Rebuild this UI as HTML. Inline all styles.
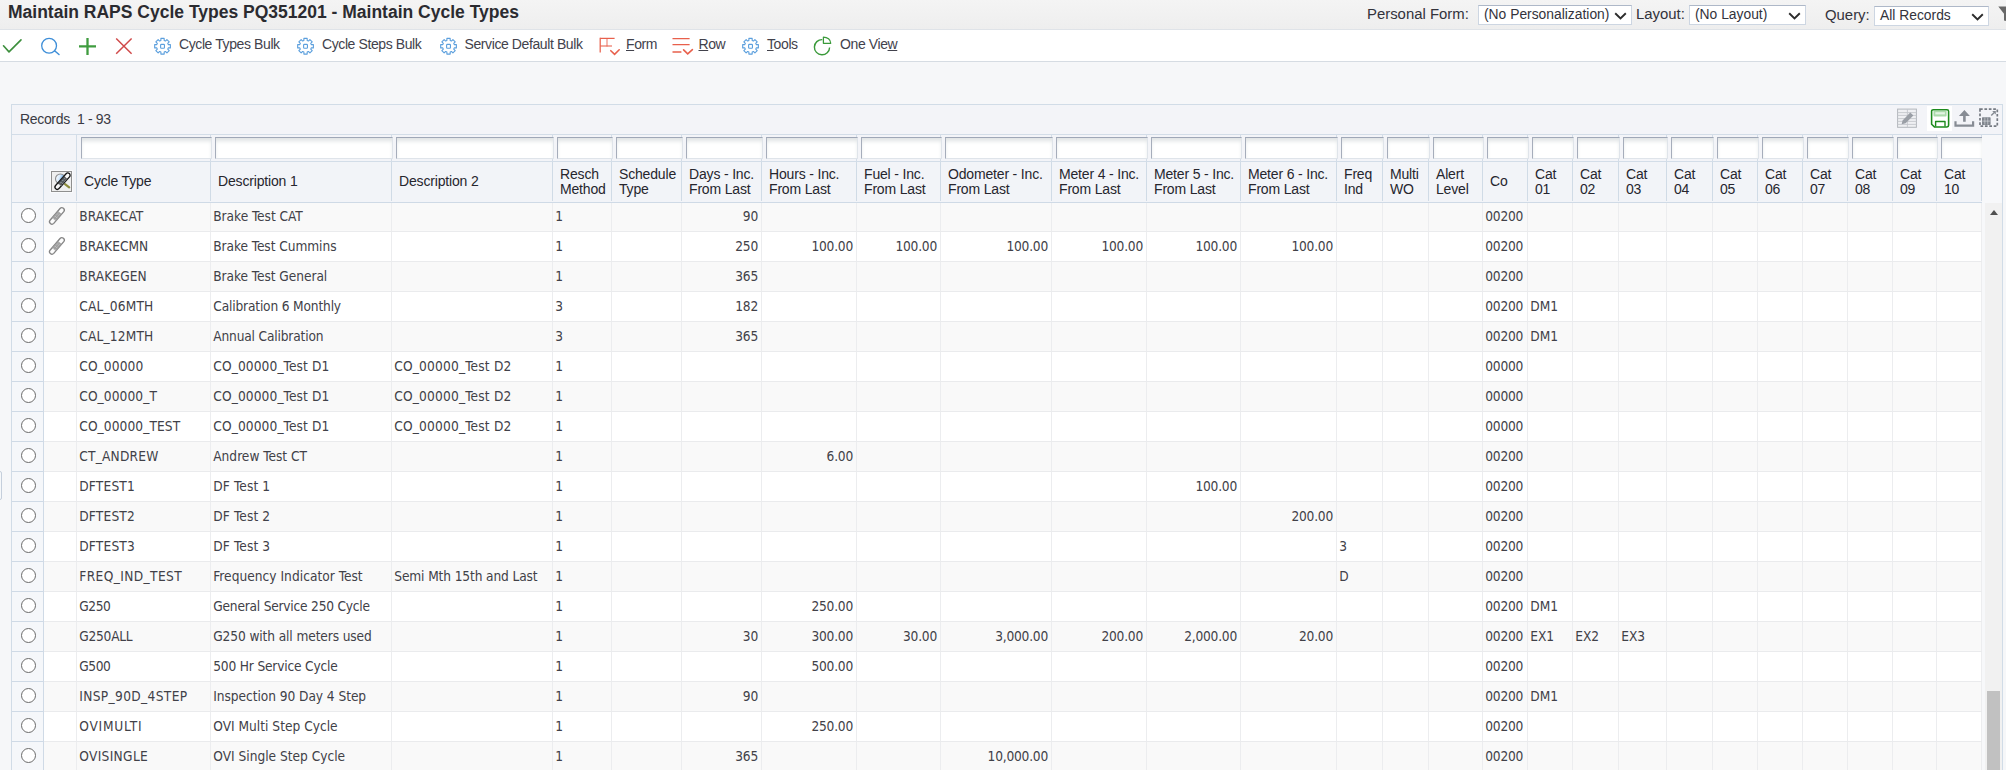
<!DOCTYPE html>
<html><head><meta charset="utf-8"><title>Maintain RAPS Cycle Types</title>
<style>
*{box-sizing:border-box;margin:0;padding:0}
html,body{width:2006px;height:770px;overflow:hidden}
body{background:#f6f7f9;font-family:"Liberation Sans",Arial,sans-serif;color:#2a2a35;position:relative}
#title{position:absolute;left:0;top:0;width:2006px;height:30px;background:linear-gradient(#f4f4f4,#eeeeee);border-bottom:1px solid #dfe3e8}
#title h1{position:absolute;left:8px;top:2px;font-size:17.5px;font-weight:bold;line-height:21px;color:#2b2b30;white-space:nowrap}
.lbl{position:absolute;font-size:14.9px;line-height:18px;color:#33333c;white-space:nowrap}
.sel{position:absolute;height:20px;background:#fff;border:1px solid #cdd6e2;border-top-color:#aeb8c8;font-size:13.85px;line-height:16px;color:#33333c;padding-left:5px;white-space:nowrap}
.sel svg{position:absolute;top:6px}
#tb{position:absolute;left:0;top:30px;width:2006px;height:32px;background:#fff;border-bottom:1px solid #d6dce3}
#tb .t{position:absolute;top:6.4px;font-size:14px;letter-spacing:-0.4px;line-height:16px;color:#42424c;white-space:nowrap}
#tb svg{position:absolute}
#grid{position:absolute;left:11px;top:104px;width:1992px;height:680px;border:1px solid #d1dce7;background:#f7f8fa}
#rec{position:absolute;left:0;top:0;width:1990px;height:30px;border-bottom:1px solid #d3dde8;background:#f3f4f8}
#rec span{position:absolute;left:8px;top:6.4px;font-size:14px;letter-spacing:-0.33px;line-height:16px;color:#3a3a44;white-space:pre}
#filt{position:absolute;left:0;top:30px;width:1970px;height:26px;background:#f3f4f8;overflow:hidden}
#filt i{position:absolute;top:0;height:26px;border-left:1px solid #d3dde8}
#filt b{position:absolute;top:2px;height:22px;background:#fff;border:1px solid #dfe4ea;border-top:1px solid #9fa7b7;border-left:1px solid #a6adbb;box-shadow:inset 0 4px 4px -1px #dfe3e4}
#hdr{position:absolute;left:0;top:56px;width:1970px;height:42px;z-index:3;background:#f2f4f8;border-top:1px solid #d3dde8;border-bottom:1px solid #cfdae6;overflow:hidden}
#hdr .h{position:absolute;top:0;height:39px;padding-top:1px;padding-bottom:0px;border-right:1px solid #d0dbe6;font-size:14px;letter-spacing:-0.17px;line-height:15px;color:#26262e;padding-left:7px;display:flex;flex-direction:column;justify-content:center;white-space:nowrap}
#body{position:absolute;left:0;top:97px;width:1970px;height:600px;overflow:hidden;background:#fff}
.r{position:absolute;left:0;width:1970px;height:30px;border-bottom:1px solid #eaebed;background:#fff}
.r.o{background:#f9f9f9}
.c{position:absolute;top:0;height:29px;border-right:1px solid #ecedef;font-family:"DejaVu Sans Condensed","DejaVu Sans",sans-serif;font-size:13.6px;line-height:29px;color:#414148;white-space:nowrap;padding:0 3px 0 2.25px}
.c.rt{text-align:right}
.c.rad{background:#f5f7fa;border-right:1px solid #cfdae6;height:30px;border-bottom:1px solid #cfdae6}
.c.rad u{position:absolute;left:9px;top:6px;width:15px;height:15px;border:1.3px solid #6b6b6b;border-radius:50%;background:#fff}
.clip{position:absolute;left:0;top:0}
#sb{position:absolute;left:1973px;top:98px;width:17px;height:600px;background:#f1f1f1}
#sb .th{position:absolute;left:2px;top:488px;width:13px;height:120px;background:#c1c1c1}
#sb .up{position:absolute;left:4.5px;top:7px;width:0;height:0;border-left:4px solid transparent;border-right:4px solid transparent;border-bottom:5px solid #505050}
</style></head><body>

<div id="title"><h1>Maintain RAPS Cycle Types PQ351201 - Maintain Cycle Types</h1>
<span class="lbl" style="left:1367px;top:5px">Personal Form:</span>
<div class="sel" style="left:1478px;top:5px;width:154px">(No Personalization)<svg width="13" height="8" viewBox="0 0 13 8" style="left:135px"><path d="M1.2 1.2 L6.5 6.4 L11.8 1.2" fill="none" stroke="#2c2c2c" stroke-width="1.9"/></svg></div>
<span class="lbl" style="left:1636px;top:5px">Layout:</span>
<div class="sel" style="left:1689px;top:5px;width:117px">(No Layout)<svg width="13" height="8" viewBox="0 0 13 8" style="left:98px"><path d="M1.2 1.2 L6.5 6.4 L11.8 1.2" fill="none" stroke="#2c2c2c" stroke-width="1.9"/></svg></div>
<span class="lbl" style="left:1825px;top:6px">Query:</span>
<div class="sel" style="left:1874px;top:6px;width:115px">All Records<svg width="13" height="8" viewBox="0 0 13 8" style="left:96px"><path d="M1.2 1.2 L6.5 6.4 L11.8 1.2" fill="none" stroke="#2c2c2c" stroke-width="1.9"/></svg></div>
<svg style="position:absolute;left:1996px;top:0" width="10" height="30" viewBox="0 0 10 30"><path d="M2.3 6.4 H10 V21 L8 20.6 V13.7 Z" fill="#686868"/></svg>
</div>
<div id="tb">
<svg style="left:0;top:6px" width="26" height="22" viewBox="0 0 26 22"><path d="M3.5 9.8 L9 15.9 L21 3.9" fill="none" stroke="#3d8f3d" stroke-width="1.6" stroke-linecap="round" stroke-linejoin="round"/></svg>
<svg style="left:38px;top:6px" width="24" height="22" viewBox="0 0 24 22"><circle cx="11.1" cy="9.7" r="7.4" fill="none" stroke="#3f8fd8" stroke-width="1.3"/><path d="M16.6 14.8 L21 18.5" stroke="#3f8fd8" stroke-width="1.5" stroke-linecap="round"/></svg>
<svg style="left:77px;top:6px" width="22" height="22" viewBox="0 0 22 22"><path d="M2 10.4 H19 M10.5 1.9 V18.9" stroke="#3f9c3f" stroke-width="2.3" fill="none"/></svg>
<svg style="left:113px;top:6px" width="22" height="22" viewBox="0 0 22 22"><path d="M3.2 2.5 L18.6 17.7 M18.6 2.5 L3.2 17.7" stroke="#d04a4a" stroke-width="1.5" fill="none"/></svg>
<svg style="left:152.7px;top:6.4px" width="20" height="20" viewBox="0 0 20 20"><g fill="none" stroke="#5b9fdd" stroke-width="1.15" stroke-linejoin="round" transform="translate(-0.1 0.85) scale(0.963)"><path d="M8.3 1.6h3.4v2.2l1.3.55 1.55-1.55 2.4 2.4-1.55 1.55.55 1.3h2.2v3.4h-2.2l-.55 1.3 1.55 1.55-2.4 2.4-1.55-1.55-1.3.55v2.2H8.3v-2.2l-1.3-.55-1.55 1.55-2.4-2.4 1.55-1.55-.55-1.3H1.85V8.05h2.2l.55-1.3L3.05 5.2l2.4-2.4L7 4.35l1.3-.55z"/><rect x="8" y="7.8" width="4" height="4" rx="0.8"/></g></svg>
<span class="t" style="left:179px">Cycle Types Bulk</span>
<svg style="left:296px;top:6.4px" width="20" height="20" viewBox="0 0 20 20"><g fill="none" stroke="#5b9fdd" stroke-width="1.15" stroke-linejoin="round" transform="translate(-0.1 0.85) scale(0.963)"><path d="M8.3 1.6h3.4v2.2l1.3.55 1.55-1.55 2.4 2.4-1.55 1.55.55 1.3h2.2v3.4h-2.2l-.55 1.3 1.55 1.55-2.4 2.4-1.55-1.55-1.3.55v2.2H8.3v-2.2l-1.3-.55-1.55 1.55-2.4-2.4 1.55-1.55-.55-1.3H1.85V8.05h2.2l.55-1.3L3.05 5.2l2.4-2.4L7 4.35l1.3-.55z"/><rect x="8" y="7.8" width="4" height="4" rx="0.8"/></g></svg>
<span class="t" style="left:322px">Cycle Steps Bulk</span>
<svg style="left:438.5px;top:6.4px" width="20" height="20" viewBox="0 0 20 20"><g fill="none" stroke="#5b9fdd" stroke-width="1.15" stroke-linejoin="round" transform="translate(-0.1 0.85) scale(0.963)"><path d="M8.3 1.6h3.4v2.2l1.3.55 1.55-1.55 2.4 2.4-1.55 1.55.55 1.3h2.2v3.4h-2.2l-.55 1.3 1.55 1.55-2.4 2.4-1.55-1.55-1.3.55v2.2H8.3v-2.2l-1.3-.55-1.55 1.55-2.4-2.4 1.55-1.55-.55-1.3H1.85V8.05h2.2l.55-1.3L3.05 5.2l2.4-2.4L7 4.35l1.3-.55z"/><rect x="8" y="7.8" width="4" height="4" rx="0.8"/></g></svg>
<span class="t" style="left:464.5px">Service Default Bulk</span>
<svg style="left:597px;top:6px" width="26" height="22" viewBox="0 0 26 22"><g fill="none" stroke="#e8604c" stroke-width="1.25"><path d="M3.2 1.8 V16.4" /><path d="M3.2 2.4 H17.6"/><path d="M3.2 10 H15" stroke-opacity=".85"/><path d="M10 2.4 V10.6" stroke-opacity=".7"/><path d="M13.8 14.7 L17.6 18.4 L22.2 13.8" stroke-width="1.6" stroke-linecap="round"/></g></svg>
<span class="t" style="left:626px"><u>F</u>orm</span>
<svg style="left:670px;top:6px" width="26" height="22" viewBox="0 0 26 22"><g fill="none" stroke="#e8604c" stroke-width="1.3"><path d="M2.5 2.7 H19.6 M2.5 8.7 H19.6 M2.5 16 H11.4"/><path d="M13.6 13.9 L17.7 17.9 L22.4 13.6" stroke-width="1.6" stroke-linecap="round"/></g></svg>
<span class="t" style="left:698.5px"><u>R</u>ow</span>
<svg style="left:740.5px;top:6.4px" width="20" height="20" viewBox="0 0 20 20"><g fill="none" stroke="#5b9fdd" stroke-width="1.15" stroke-linejoin="round" transform="translate(-0.1 0.85) scale(0.963)"><path d="M8.3 1.6h3.4v2.2l1.3.55 1.55-1.55 2.4 2.4-1.55 1.55.55 1.3h2.2v3.4h-2.2l-.55 1.3 1.55 1.55-2.4 2.4-1.55-1.55-1.3.55v2.2H8.3v-2.2l-1.3-.55-1.55 1.55-2.4-2.4 1.55-1.55-.55-1.3H1.85V8.05h2.2l.55-1.3L3.05 5.2l2.4-2.4L7 4.35l1.3-.55z"/><rect x="8" y="7.8" width="4" height="4" rx="0.8"/></g></svg>
<span class="t" style="left:767px"><u>T</u>ools</span>
<svg style="left:811px;top:5px" width="24" height="24" viewBox="0 0 24 24"><g fill="none" stroke="#3a9a3a" stroke-width="1.4"><path d="M11.3 4.6 A7.6 7.6 0 1 0 18.6 12.4"/><path d="M12.4 2 V8.3 H19.7 A7.3 6.3 0 0 0 12.4 2 Z" stroke-linejoin="round" stroke-width="1.25"/></g></svg>
<span class="t" style="left:840px">One Vie<u>w</u></span>
</div>
<div style="position:absolute;left:-2px;top:471px;width:4px;height:29px;border:1px solid #c5cfdc;border-radius:3px;background:#f6f8fa"></div>
<div id="grid">
<div id="rec"><span>Records  1 - 93</span></div>
<svg style="position:absolute;left:1885px;top:3px" width="21" height="21" viewBox="0 0 21 21"><g opacity=".8"><rect x=".6" y="1.1" width="18.8" height="18.2" fill="#eff0f3" stroke="#a4a8ae" stroke-width="1"/><path d="M.6 4.6 H19.4 M.6 7.4 H19.4 M.6 10.6 H19.4 M.6 13.4 H19.4 M.6 16.4 H19.4 M10.4 1.1 V19.3" stroke="#b9bcc2" stroke-width=".9" fill="none"/><path d="M4.6 16.2 L5.6 12.4 L13.2 4.6 L16.4 7.6 L8.6 15.2 Z" fill="#858a92"/></g></svg>
<div style="position:absolute;left:1915px;top:1px;width:25px;height:25px;background:#fff"></div>
<svg style="position:absolute;left:1918px;top:2.5px" width="21" height="21" viewBox="0 0 21 21"><g fill="none" stroke="#1d8a1d" stroke-width="1.55" stroke-linejoin="round"><path d="M3.2 1.7 H17 a1.6 1.6 0 0 1 1.6 1.6 V17.3 a1.6 1.6 0 0 1 -1.6 1.6 H4.4 L1.6 16.2 V3.3 a1.6 1.6 0 0 1 1.6 -1.6 Z"/><path d="M5.6 18.6 V13.5 H15 V18.6" stroke-width="1.4"/></g><rect x="3.5" y="2.6" width="13.1" height="5.9" rx="1" fill="#8fce8f" fill-opacity=".75"/><rect x="5.3" y="4.2" width="9.6" height="2.2" fill="#e9f6e9" fill-opacity=".9"/></svg>
<svg style="position:absolute;left:1942px;top:3px" width="22" height="21" viewBox="0 0 22 21"><path d="M1.5 13.2 V17.7 H19.1 V13.2" fill="none" stroke="#878c94" stroke-width="2.2"/><path d="M10.4 2 L15.9 7.9 H11.7 V13.8 H9.1 V7.9 H4.9 Z" fill="#878c94"/></svg>
<svg style="position:absolute;left:1967px;top:3px" width="21" height="21" viewBox="0 0 21 21"><rect x="1" y="1.2" width="17.3" height="17" fill="none" stroke="#757a82" stroke-width="1.7" stroke-dasharray="2.7 1.7"/><rect x="3" y="9.3" width="8.6" height="7.6" rx=".6" fill="#80858d"/><path d="M5.85 9.6 V16.6 M8.75 9.6 V16.6 M3.3 13.1 H11.3" stroke="#eef0f3" stroke-opacity=".7" stroke-width=".7" fill="none"/><path d="M12.2 7.4 L15.6 4.2" fill="none" stroke="#858a92" stroke-width="1.4"/><path d="M13.2 3 H16.8 V6.6 Z" fill="#858a92"/></svg>
<div id="filt">
<i style="left:64px"></i>
<i style="left:198px"></i><b style="left:69px;width:131px"></b>
<i style="left:379px"></i><b style="left:203px;width:178px"></b>
<i style="left:540px"></i><b style="left:384px;width:158px"></b>
<i style="left:599px"></i><b style="left:545px;width:56px"></b>
<i style="left:669px"></i><b style="left:604px;width:67px"></b>
<i style="left:749px"></i><b style="left:674px;width:77px"></b>
<i style="left:844px"></i><b style="left:754px;width:92px"></b>
<i style="left:928px"></i><b style="left:849px;width:81px"></b>
<i style="left:1039px"></i><b style="left:933px;width:108px"></b>
<i style="left:1134px"></i><b style="left:1044px;width:92px"></b>
<i style="left:1228px"></i><b style="left:1139px;width:91px"></b>
<i style="left:1324px"></i><b style="left:1233px;width:93px"></b>
<i style="left:1370px"></i><b style="left:1329px;width:43px"></b>
<i style="left:1416px"></i><b style="left:1375px;width:43px"></b>
<i style="left:1470px"></i><b style="left:1421px;width:51px"></b>
<i style="left:1515px"></i><b style="left:1475px;width:42px"></b>
<i style="left:1560px"></i><b style="left:1520px;width:42px"></b>
<i style="left:1606px"></i><b style="left:1565px;width:43px"></b>
<i style="left:1654px"></i><b style="left:1611px;width:45px"></b>
<i style="left:1700px"></i><b style="left:1659px;width:43px"></b>
<i style="left:1745px"></i><b style="left:1705px;width:42px"></b>
<i style="left:1790px"></i><b style="left:1750px;width:42px"></b>
<i style="left:1835px"></i><b style="left:1795px;width:42px"></b>
<i style="left:1880px"></i><b style="left:1840px;width:42px"></b>
<i style="left:1924px"></i><b style="left:1885px;width:41px"></b>
<i style="left:1969px"></i><b style="left:1929px;width:42px"></b>
</div>
<div id="hdr">
<div class="h" style="left:0;width:32px"></div>
<div class="h" style="left:32px;width:33px;padding:0"><svg style="position:absolute;left:2px;top:4px" width="30" height="30" viewBox="0 0 30 30"><rect x="5.5" y="5.5" width="20" height="20" fill="#efefef" stroke="#8f8f8f"/><rect x="4.5" y="4.5" width="22" height="22" fill="none" stroke="#fafbfc" stroke-opacity=".8"/><defs><linearGradient id="lg" x1="0" y1="0" x2="1" y2="0.3"><stop offset="0" stop-color="#ffffff"/><stop offset=".45" stop-color="#dcecfb"/><stop offset="1" stop-color="#3f93e6"/></linearGradient></defs><circle cx="14.4" cy="12.9" r="4.9" fill="url(#lg)" stroke="#8d8d8d" stroke-width="1.1"/><path d="M19 18.2 L23.2 21.4" stroke="#8c8c3c" stroke-width="2.2" stroke-linecap="round"/><path d="M13.01 22.54 L23.51 10.84 A2.3 2.3 0 0 0 20.09 7.76 L9.59 19.46 A2.3 2.3 0 0 0 13.01 22.54 Z" fill="#ffffff" fill-opacity=".55" stroke="#151515" stroke-width="1.3"/><path d="M15.02 20.30 L21.49 13.08 L18.07 10.01 L11.59 17.23 Z" fill="#3a3a3a" fill-opacity=".8"/><path d="M13.2 18.6 L19.6 11.4 M14.6 19.9 L21 12.7" stroke="#c9d3dd" stroke-width=".8" stroke-dasharray="1.1 1.3" fill="none"/></svg></div>
<div class="h" style="left:65px;width:134px;padding-bottom:2px"><span>Cycle Type</span></div>
<div class="h" style="left:199px;width:181px;padding-bottom:2px"><span>Description 1</span></div>
<div class="h" style="left:380px;width:161px;padding-bottom:2px"><span>Description 2</span></div>
<div class="h" style="left:541px;width:59px"><span>Resch</span><span>Method</span></div>
<div class="h" style="left:600px;width:70px"><span>Schedule</span><span>Type</span></div>
<div class="h" style="left:670px;width:80px"><span>Days - Inc.</span><span>From Last</span></div>
<div class="h" style="left:750px;width:95px"><span>Hours - Inc.</span><span>From Last</span></div>
<div class="h" style="left:845px;width:84px"><span>Fuel - Inc.</span><span>From Last</span></div>
<div class="h" style="left:929px;width:111px"><span>Odometer - Inc.</span><span>From Last</span></div>
<div class="h" style="left:1040px;width:95px"><span>Meter 4 - Inc.</span><span>From Last</span></div>
<div class="h" style="left:1135px;width:94px"><span>Meter 5 - Inc.</span><span>From Last</span></div>
<div class="h" style="left:1229px;width:96px"><span>Meter 6 - Inc.</span><span>From Last</span></div>
<div class="h" style="left:1325px;width:46px"><span>Freq</span><span>Ind</span></div>
<div class="h" style="left:1371px;width:46px"><span>Multi</span><span>WO</span></div>
<div class="h" style="left:1417px;width:54px"><span>Alert</span><span>Level</span></div>
<div class="h" style="left:1471px;width:45px;padding-bottom:2px"><span>Co</span></div>
<div class="h" style="left:1516px;width:45px"><span>Cat</span><span>01</span></div>
<div class="h" style="left:1561px;width:46px"><span>Cat</span><span>02</span></div>
<div class="h" style="left:1607px;width:48px"><span>Cat</span><span>03</span></div>
<div class="h" style="left:1655px;width:46px"><span>Cat</span><span>04</span></div>
<div class="h" style="left:1701px;width:45px"><span>Cat</span><span>05</span></div>
<div class="h" style="left:1746px;width:45px"><span>Cat</span><span>06</span></div>
<div class="h" style="left:1791px;width:45px"><span>Cat</span><span>07</span></div>
<div class="h" style="left:1836px;width:45px"><span>Cat</span><span>08</span></div>
<div class="h" style="left:1881px;width:44px"><span>Cat</span><span>09</span></div>
<div class="h" style="left:1925px;width:45px"><span>Cat</span><span>10</span></div>
</div>
<div id="body">
<div class="r o" style="top:0px">
<div class="c rad" style="left:0;width:32px"><u></u></div>
<div class="c" style="left:32px;width:33px"><svg class="clip" width="33" height="29" viewBox="0 0 33 29"><path d="M9.76 21.39 L19.76 9.69 A2.45 2.45 0 0 0 16.04 6.51 L6.04 18.21 A2.45 2.45 0 0 0 9.76 21.39 Z" fill="#fcfcfc" stroke="#858585" stroke-width="1.35"/><path d="M11.71 19.11 L17.68 12.12 L13.96 8.94 L7.99 15.93 Z" fill="#9e9e9e"/><path d="M10.70 17.85 L16.28 11.32 M9.39 16.73 L14.97 10.20" stroke="#dcdcdc" stroke-width=".8" stroke-dasharray="1.1 1.2" fill="none"/></svg></div>
<div class="c" style="left:65px;width:134px;letter-spacing:0.03px">BRAKECAT</div>
<div class="c" style="left:199px;width:181px;letter-spacing:-0.03px">Brake Test CAT</div>
<div class="c" style="left:380px;width:161px"></div>
<div class="c" style="left:541px;width:59px">1</div>
<div class="c" style="left:600px;width:70px"></div>
<div class="c rt" style="left:670px;width:80px;letter-spacing:-0.2px">90</div>
<div class="c rt" style="left:750px;width:95px"></div>
<div class="c rt" style="left:845px;width:84px"></div>
<div class="c rt" style="left:929px;width:111px"></div>
<div class="c rt" style="left:1040px;width:95px"></div>
<div class="c rt" style="left:1135px;width:94px"></div>
<div class="c rt" style="left:1229px;width:96px"></div>
<div class="c" style="left:1325px;width:46px"></div>
<div class="c" style="left:1371px;width:46px"></div>
<div class="c" style="left:1417px;width:54px"></div>
<div class="c" style="left:1471px;width:45px;letter-spacing:-0.2px">00200</div>
<div class="c" style="left:1516px;width:45px"></div>
<div class="c" style="left:1561px;width:46px"></div>
<div class="c" style="left:1607px;width:48px"></div>
<div class="c" style="left:1655px;width:46px"></div>
<div class="c" style="left:1701px;width:45px"></div>
<div class="c" style="left:1746px;width:45px"></div>
<div class="c" style="left:1791px;width:45px"></div>
<div class="c" style="left:1836px;width:45px"></div>
<div class="c" style="left:1881px;width:44px"></div>
<div class="c" style="left:1925px;width:45px"></div>
</div>
<div class="r" style="top:30px">
<div class="c rad" style="left:0;width:32px"><u></u></div>
<div class="c" style="left:32px;width:33px"><svg class="clip" width="33" height="29" viewBox="0 0 33 29"><path d="M9.76 21.39 L19.76 9.69 A2.45 2.45 0 0 0 16.04 6.51 L6.04 18.21 A2.45 2.45 0 0 0 9.76 21.39 Z" fill="#fcfcfc" stroke="#858585" stroke-width="1.35"/><path d="M11.71 19.11 L17.68 12.12 L13.96 8.94 L7.99 15.93 Z" fill="#9e9e9e"/><path d="M10.70 17.85 L16.28 11.32 M9.39 16.73 L14.97 10.20" stroke="#dcdcdc" stroke-width=".8" stroke-dasharray="1.1 1.2" fill="none"/></svg></div>
<div class="c" style="left:65px;width:134px;letter-spacing:0.04px">BRAKECMN</div>
<div class="c" style="left:199px;width:181px;letter-spacing:-0.06px">Brake Test Cummins</div>
<div class="c" style="left:380px;width:161px"></div>
<div class="c" style="left:541px;width:59px">1</div>
<div class="c" style="left:600px;width:70px"></div>
<div class="c rt" style="left:670px;width:80px;letter-spacing:-0.2px">250</div>
<div class="c rt" style="left:750px;width:95px;letter-spacing:-0.2px">100.00</div>
<div class="c rt" style="left:845px;width:84px;letter-spacing:-0.2px">100.00</div>
<div class="c rt" style="left:929px;width:111px;letter-spacing:-0.2px">100.00</div>
<div class="c rt" style="left:1040px;width:95px;letter-spacing:-0.2px">100.00</div>
<div class="c rt" style="left:1135px;width:94px;letter-spacing:-0.2px">100.00</div>
<div class="c rt" style="left:1229px;width:96px;letter-spacing:-0.2px">100.00</div>
<div class="c" style="left:1325px;width:46px"></div>
<div class="c" style="left:1371px;width:46px"></div>
<div class="c" style="left:1417px;width:54px"></div>
<div class="c" style="left:1471px;width:45px;letter-spacing:-0.2px">00200</div>
<div class="c" style="left:1516px;width:45px"></div>
<div class="c" style="left:1561px;width:46px"></div>
<div class="c" style="left:1607px;width:48px"></div>
<div class="c" style="left:1655px;width:46px"></div>
<div class="c" style="left:1701px;width:45px"></div>
<div class="c" style="left:1746px;width:45px"></div>
<div class="c" style="left:1791px;width:45px"></div>
<div class="c" style="left:1836px;width:45px"></div>
<div class="c" style="left:1881px;width:44px"></div>
<div class="c" style="left:1925px;width:45px"></div>
</div>
<div class="r o" style="top:60px">
<div class="c rad" style="left:0;width:32px"><u></u></div>
<div class="c" style="left:32px;width:33px"></div>
<div class="c" style="left:65px;width:134px;letter-spacing:0.1px">BRAKEGEN</div>
<div class="c" style="left:199px;width:181px;letter-spacing:-0.05px">Brake Test General</div>
<div class="c" style="left:380px;width:161px"></div>
<div class="c" style="left:541px;width:59px">1</div>
<div class="c" style="left:600px;width:70px"></div>
<div class="c rt" style="left:670px;width:80px;letter-spacing:-0.2px">365</div>
<div class="c rt" style="left:750px;width:95px"></div>
<div class="c rt" style="left:845px;width:84px"></div>
<div class="c rt" style="left:929px;width:111px"></div>
<div class="c rt" style="left:1040px;width:95px"></div>
<div class="c rt" style="left:1135px;width:94px"></div>
<div class="c rt" style="left:1229px;width:96px"></div>
<div class="c" style="left:1325px;width:46px"></div>
<div class="c" style="left:1371px;width:46px"></div>
<div class="c" style="left:1417px;width:54px"></div>
<div class="c" style="left:1471px;width:45px;letter-spacing:-0.2px">00200</div>
<div class="c" style="left:1516px;width:45px"></div>
<div class="c" style="left:1561px;width:46px"></div>
<div class="c" style="left:1607px;width:48px"></div>
<div class="c" style="left:1655px;width:46px"></div>
<div class="c" style="left:1701px;width:45px"></div>
<div class="c" style="left:1746px;width:45px"></div>
<div class="c" style="left:1791px;width:45px"></div>
<div class="c" style="left:1836px;width:45px"></div>
<div class="c" style="left:1881px;width:44px"></div>
<div class="c" style="left:1925px;width:45px"></div>
</div>
<div class="r" style="top:90px">
<div class="c rad" style="left:0;width:32px"><u></u></div>
<div class="c" style="left:32px;width:33px"></div>
<div class="c" style="left:65px;width:134px;letter-spacing:0.17px">CAL_06MTH</div>
<div class="c" style="left:199px;width:181px;letter-spacing:-0.16px">Calibration 6 Monthly</div>
<div class="c" style="left:380px;width:161px"></div>
<div class="c" style="left:541px;width:59px">3</div>
<div class="c" style="left:600px;width:70px"></div>
<div class="c rt" style="left:670px;width:80px;letter-spacing:-0.2px">182</div>
<div class="c rt" style="left:750px;width:95px"></div>
<div class="c rt" style="left:845px;width:84px"></div>
<div class="c rt" style="left:929px;width:111px"></div>
<div class="c rt" style="left:1040px;width:95px"></div>
<div class="c rt" style="left:1135px;width:94px"></div>
<div class="c rt" style="left:1229px;width:96px"></div>
<div class="c" style="left:1325px;width:46px"></div>
<div class="c" style="left:1371px;width:46px"></div>
<div class="c" style="left:1417px;width:54px"></div>
<div class="c" style="left:1471px;width:45px;letter-spacing:-0.2px">00200</div>
<div class="c" style="left:1516px;width:45px">DM1</div>
<div class="c" style="left:1561px;width:46px"></div>
<div class="c" style="left:1607px;width:48px"></div>
<div class="c" style="left:1655px;width:46px"></div>
<div class="c" style="left:1701px;width:45px"></div>
<div class="c" style="left:1746px;width:45px"></div>
<div class="c" style="left:1791px;width:45px"></div>
<div class="c" style="left:1836px;width:45px"></div>
<div class="c" style="left:1881px;width:44px"></div>
<div class="c" style="left:1925px;width:45px"></div>
</div>
<div class="r o" style="top:120px">
<div class="c rad" style="left:0;width:32px"><u></u></div>
<div class="c" style="left:32px;width:33px"></div>
<div class="c" style="left:65px;width:134px;letter-spacing:0.17px">CAL_12MTH</div>
<div class="c" style="left:199px;width:181px;letter-spacing:-0.16px">Annual Calibration</div>
<div class="c" style="left:380px;width:161px"></div>
<div class="c" style="left:541px;width:59px">3</div>
<div class="c" style="left:600px;width:70px"></div>
<div class="c rt" style="left:670px;width:80px;letter-spacing:-0.2px">365</div>
<div class="c rt" style="left:750px;width:95px"></div>
<div class="c rt" style="left:845px;width:84px"></div>
<div class="c rt" style="left:929px;width:111px"></div>
<div class="c rt" style="left:1040px;width:95px"></div>
<div class="c rt" style="left:1135px;width:94px"></div>
<div class="c rt" style="left:1229px;width:96px"></div>
<div class="c" style="left:1325px;width:46px"></div>
<div class="c" style="left:1371px;width:46px"></div>
<div class="c" style="left:1417px;width:54px"></div>
<div class="c" style="left:1471px;width:45px;letter-spacing:-0.2px">00200</div>
<div class="c" style="left:1516px;width:45px">DM1</div>
<div class="c" style="left:1561px;width:46px"></div>
<div class="c" style="left:1607px;width:48px"></div>
<div class="c" style="left:1655px;width:46px"></div>
<div class="c" style="left:1701px;width:45px"></div>
<div class="c" style="left:1746px;width:45px"></div>
<div class="c" style="left:1791px;width:45px"></div>
<div class="c" style="left:1836px;width:45px"></div>
<div class="c" style="left:1881px;width:44px"></div>
<div class="c" style="left:1925px;width:45px"></div>
</div>
<div class="r" style="top:150px">
<div class="c rad" style="left:0;width:32px"><u></u></div>
<div class="c" style="left:32px;width:33px"></div>
<div class="c" style="left:65px;width:134px;letter-spacing:0.11px">CO_00000</div>
<div class="c" style="left:199px;width:181px;letter-spacing:0.12px">CO_00000_Test D1</div>
<div class="c" style="left:380px;width:161px;letter-spacing:0.19px">CO_00000_Test D2</div>
<div class="c" style="left:541px;width:59px">1</div>
<div class="c" style="left:600px;width:70px"></div>
<div class="c rt" style="left:670px;width:80px"></div>
<div class="c rt" style="left:750px;width:95px"></div>
<div class="c rt" style="left:845px;width:84px"></div>
<div class="c rt" style="left:929px;width:111px"></div>
<div class="c rt" style="left:1040px;width:95px"></div>
<div class="c rt" style="left:1135px;width:94px"></div>
<div class="c rt" style="left:1229px;width:96px"></div>
<div class="c" style="left:1325px;width:46px"></div>
<div class="c" style="left:1371px;width:46px"></div>
<div class="c" style="left:1417px;width:54px"></div>
<div class="c" style="left:1471px;width:45px;letter-spacing:-0.2px">00000</div>
<div class="c" style="left:1516px;width:45px"></div>
<div class="c" style="left:1561px;width:46px"></div>
<div class="c" style="left:1607px;width:48px"></div>
<div class="c" style="left:1655px;width:46px"></div>
<div class="c" style="left:1701px;width:45px"></div>
<div class="c" style="left:1746px;width:45px"></div>
<div class="c" style="left:1791px;width:45px"></div>
<div class="c" style="left:1836px;width:45px"></div>
<div class="c" style="left:1881px;width:44px"></div>
<div class="c" style="left:1925px;width:45px"></div>
</div>
<div class="r o" style="top:180px">
<div class="c rad" style="left:0;width:32px"><u></u></div>
<div class="c" style="left:32px;width:33px"></div>
<div class="c" style="left:65px;width:134px;letter-spacing:0.1px">CO_00000_T</div>
<div class="c" style="left:199px;width:181px;letter-spacing:0.12px">CO_00000_Test D1</div>
<div class="c" style="left:380px;width:161px;letter-spacing:0.19px">CO_00000_Test D2</div>
<div class="c" style="left:541px;width:59px">1</div>
<div class="c" style="left:600px;width:70px"></div>
<div class="c rt" style="left:670px;width:80px"></div>
<div class="c rt" style="left:750px;width:95px"></div>
<div class="c rt" style="left:845px;width:84px"></div>
<div class="c rt" style="left:929px;width:111px"></div>
<div class="c rt" style="left:1040px;width:95px"></div>
<div class="c rt" style="left:1135px;width:94px"></div>
<div class="c rt" style="left:1229px;width:96px"></div>
<div class="c" style="left:1325px;width:46px"></div>
<div class="c" style="left:1371px;width:46px"></div>
<div class="c" style="left:1417px;width:54px"></div>
<div class="c" style="left:1471px;width:45px;letter-spacing:-0.2px">00000</div>
<div class="c" style="left:1516px;width:45px"></div>
<div class="c" style="left:1561px;width:46px"></div>
<div class="c" style="left:1607px;width:48px"></div>
<div class="c" style="left:1655px;width:46px"></div>
<div class="c" style="left:1701px;width:45px"></div>
<div class="c" style="left:1746px;width:45px"></div>
<div class="c" style="left:1791px;width:45px"></div>
<div class="c" style="left:1836px;width:45px"></div>
<div class="c" style="left:1881px;width:44px"></div>
<div class="c" style="left:1925px;width:45px"></div>
</div>
<div class="r" style="top:210px">
<div class="c rad" style="left:0;width:32px"><u></u></div>
<div class="c" style="left:32px;width:33px"></div>
<div class="c" style="left:65px;width:134px;letter-spacing:0.1px">CO_00000_TEST</div>
<div class="c" style="left:199px;width:181px;letter-spacing:0.12px">CO_00000_Test D1</div>
<div class="c" style="left:380px;width:161px;letter-spacing:0.19px">CO_00000_Test D2</div>
<div class="c" style="left:541px;width:59px">1</div>
<div class="c" style="left:600px;width:70px"></div>
<div class="c rt" style="left:670px;width:80px"></div>
<div class="c rt" style="left:750px;width:95px"></div>
<div class="c rt" style="left:845px;width:84px"></div>
<div class="c rt" style="left:929px;width:111px"></div>
<div class="c rt" style="left:1040px;width:95px"></div>
<div class="c rt" style="left:1135px;width:94px"></div>
<div class="c rt" style="left:1229px;width:96px"></div>
<div class="c" style="left:1325px;width:46px"></div>
<div class="c" style="left:1371px;width:46px"></div>
<div class="c" style="left:1417px;width:54px"></div>
<div class="c" style="left:1471px;width:45px;letter-spacing:-0.2px">00000</div>
<div class="c" style="left:1516px;width:45px"></div>
<div class="c" style="left:1561px;width:46px"></div>
<div class="c" style="left:1607px;width:48px"></div>
<div class="c" style="left:1655px;width:46px"></div>
<div class="c" style="left:1701px;width:45px"></div>
<div class="c" style="left:1746px;width:45px"></div>
<div class="c" style="left:1791px;width:45px"></div>
<div class="c" style="left:1836px;width:45px"></div>
<div class="c" style="left:1881px;width:44px"></div>
<div class="c" style="left:1925px;width:45px"></div>
</div>
<div class="r o" style="top:240px">
<div class="c rad" style="left:0;width:32px"><u></u></div>
<div class="c" style="left:32px;width:33px"></div>
<div class="c" style="left:65px;width:134px;letter-spacing:0.22px">CT_ANDREW</div>
<div class="c" style="left:199px;width:181px">Andrew Test CT</div>
<div class="c" style="left:380px;width:161px"></div>
<div class="c" style="left:541px;width:59px">1</div>
<div class="c" style="left:600px;width:70px"></div>
<div class="c rt" style="left:670px;width:80px"></div>
<div class="c rt" style="left:750px;width:95px;letter-spacing:-0.2px">6.00</div>
<div class="c rt" style="left:845px;width:84px"></div>
<div class="c rt" style="left:929px;width:111px"></div>
<div class="c rt" style="left:1040px;width:95px"></div>
<div class="c rt" style="left:1135px;width:94px"></div>
<div class="c rt" style="left:1229px;width:96px"></div>
<div class="c" style="left:1325px;width:46px"></div>
<div class="c" style="left:1371px;width:46px"></div>
<div class="c" style="left:1417px;width:54px"></div>
<div class="c" style="left:1471px;width:45px;letter-spacing:-0.2px">00200</div>
<div class="c" style="left:1516px;width:45px"></div>
<div class="c" style="left:1561px;width:46px"></div>
<div class="c" style="left:1607px;width:48px"></div>
<div class="c" style="left:1655px;width:46px"></div>
<div class="c" style="left:1701px;width:45px"></div>
<div class="c" style="left:1746px;width:45px"></div>
<div class="c" style="left:1791px;width:45px"></div>
<div class="c" style="left:1836px;width:45px"></div>
<div class="c" style="left:1881px;width:44px"></div>
<div class="c" style="left:1925px;width:45px"></div>
</div>
<div class="r" style="top:270px">
<div class="c rad" style="left:0;width:32px"><u></u></div>
<div class="c" style="left:32px;width:33px"></div>
<div class="c" style="left:65px;width:134px;letter-spacing:0.19px">DFTEST1</div>
<div class="c" style="left:199px;width:181px;letter-spacing:0.13px">DF Test 1</div>
<div class="c" style="left:380px;width:161px"></div>
<div class="c" style="left:541px;width:59px">1</div>
<div class="c" style="left:600px;width:70px"></div>
<div class="c rt" style="left:670px;width:80px"></div>
<div class="c rt" style="left:750px;width:95px"></div>
<div class="c rt" style="left:845px;width:84px"></div>
<div class="c rt" style="left:929px;width:111px"></div>
<div class="c rt" style="left:1040px;width:95px"></div>
<div class="c rt" style="left:1135px;width:94px;letter-spacing:-0.2px">100.00</div>
<div class="c rt" style="left:1229px;width:96px"></div>
<div class="c" style="left:1325px;width:46px"></div>
<div class="c" style="left:1371px;width:46px"></div>
<div class="c" style="left:1417px;width:54px"></div>
<div class="c" style="left:1471px;width:45px;letter-spacing:-0.2px">00200</div>
<div class="c" style="left:1516px;width:45px"></div>
<div class="c" style="left:1561px;width:46px"></div>
<div class="c" style="left:1607px;width:48px"></div>
<div class="c" style="left:1655px;width:46px"></div>
<div class="c" style="left:1701px;width:45px"></div>
<div class="c" style="left:1746px;width:45px"></div>
<div class="c" style="left:1791px;width:45px"></div>
<div class="c" style="left:1836px;width:45px"></div>
<div class="c" style="left:1881px;width:44px"></div>
<div class="c" style="left:1925px;width:45px"></div>
</div>
<div class="r o" style="top:300px">
<div class="c rad" style="left:0;width:32px"><u></u></div>
<div class="c" style="left:32px;width:33px"></div>
<div class="c" style="left:65px;width:134px;letter-spacing:0.19px">DFTEST2</div>
<div class="c" style="left:199px;width:181px;letter-spacing:0.13px">DF Test 2</div>
<div class="c" style="left:380px;width:161px"></div>
<div class="c" style="left:541px;width:59px">1</div>
<div class="c" style="left:600px;width:70px"></div>
<div class="c rt" style="left:670px;width:80px"></div>
<div class="c rt" style="left:750px;width:95px"></div>
<div class="c rt" style="left:845px;width:84px"></div>
<div class="c rt" style="left:929px;width:111px"></div>
<div class="c rt" style="left:1040px;width:95px"></div>
<div class="c rt" style="left:1135px;width:94px"></div>
<div class="c rt" style="left:1229px;width:96px;letter-spacing:-0.2px">200.00</div>
<div class="c" style="left:1325px;width:46px"></div>
<div class="c" style="left:1371px;width:46px"></div>
<div class="c" style="left:1417px;width:54px"></div>
<div class="c" style="left:1471px;width:45px;letter-spacing:-0.2px">00200</div>
<div class="c" style="left:1516px;width:45px"></div>
<div class="c" style="left:1561px;width:46px"></div>
<div class="c" style="left:1607px;width:48px"></div>
<div class="c" style="left:1655px;width:46px"></div>
<div class="c" style="left:1701px;width:45px"></div>
<div class="c" style="left:1746px;width:45px"></div>
<div class="c" style="left:1791px;width:45px"></div>
<div class="c" style="left:1836px;width:45px"></div>
<div class="c" style="left:1881px;width:44px"></div>
<div class="c" style="left:1925px;width:45px"></div>
</div>
<div class="r" style="top:330px">
<div class="c rad" style="left:0;width:32px"><u></u></div>
<div class="c" style="left:32px;width:33px"></div>
<div class="c" style="left:65px;width:134px;letter-spacing:0.19px">DFTEST3</div>
<div class="c" style="left:199px;width:181px;letter-spacing:0.13px">DF Test 3</div>
<div class="c" style="left:380px;width:161px"></div>
<div class="c" style="left:541px;width:59px">1</div>
<div class="c" style="left:600px;width:70px"></div>
<div class="c rt" style="left:670px;width:80px"></div>
<div class="c rt" style="left:750px;width:95px"></div>
<div class="c rt" style="left:845px;width:84px"></div>
<div class="c rt" style="left:929px;width:111px"></div>
<div class="c rt" style="left:1040px;width:95px"></div>
<div class="c rt" style="left:1135px;width:94px"></div>
<div class="c rt" style="left:1229px;width:96px"></div>
<div class="c" style="left:1325px;width:46px">3</div>
<div class="c" style="left:1371px;width:46px"></div>
<div class="c" style="left:1417px;width:54px"></div>
<div class="c" style="left:1471px;width:45px;letter-spacing:-0.2px">00200</div>
<div class="c" style="left:1516px;width:45px"></div>
<div class="c" style="left:1561px;width:46px"></div>
<div class="c" style="left:1607px;width:48px"></div>
<div class="c" style="left:1655px;width:46px"></div>
<div class="c" style="left:1701px;width:45px"></div>
<div class="c" style="left:1746px;width:45px"></div>
<div class="c" style="left:1791px;width:45px"></div>
<div class="c" style="left:1836px;width:45px"></div>
<div class="c" style="left:1881px;width:44px"></div>
<div class="c" style="left:1925px;width:45px"></div>
</div>
<div class="r o" style="top:360px">
<div class="c rad" style="left:0;width:32px"><u></u></div>
<div class="c" style="left:32px;width:33px"></div>
<div class="c" style="left:65px;width:134px;letter-spacing:0.39px">FREQ_IND_TEST</div>
<div class="c" style="left:199px;width:181px;letter-spacing:0.03px">Frequency Indicator Test</div>
<div class="c" style="left:380px;width:161px;letter-spacing:-0.12px">Semi Mth 15th and Last</div>
<div class="c" style="left:541px;width:59px">1</div>
<div class="c" style="left:600px;width:70px"></div>
<div class="c rt" style="left:670px;width:80px"></div>
<div class="c rt" style="left:750px;width:95px"></div>
<div class="c rt" style="left:845px;width:84px"></div>
<div class="c rt" style="left:929px;width:111px"></div>
<div class="c rt" style="left:1040px;width:95px"></div>
<div class="c rt" style="left:1135px;width:94px"></div>
<div class="c rt" style="left:1229px;width:96px"></div>
<div class="c" style="left:1325px;width:46px">D</div>
<div class="c" style="left:1371px;width:46px"></div>
<div class="c" style="left:1417px;width:54px"></div>
<div class="c" style="left:1471px;width:45px;letter-spacing:-0.2px">00200</div>
<div class="c" style="left:1516px;width:45px"></div>
<div class="c" style="left:1561px;width:46px"></div>
<div class="c" style="left:1607px;width:48px"></div>
<div class="c" style="left:1655px;width:46px"></div>
<div class="c" style="left:1701px;width:45px"></div>
<div class="c" style="left:1746px;width:45px"></div>
<div class="c" style="left:1791px;width:45px"></div>
<div class="c" style="left:1836px;width:45px"></div>
<div class="c" style="left:1881px;width:44px"></div>
<div class="c" style="left:1925px;width:45px"></div>
</div>
<div class="r" style="top:390px">
<div class="c rad" style="left:0;width:32px"><u></u></div>
<div class="c" style="left:32px;width:33px"></div>
<div class="c" style="left:65px;width:134px;letter-spacing:-0.43px">G250</div>
<div class="c" style="left:199px;width:181px;letter-spacing:-0.21px">General Service 250 Cycle</div>
<div class="c" style="left:380px;width:161px"></div>
<div class="c" style="left:541px;width:59px">1</div>
<div class="c" style="left:600px;width:70px"></div>
<div class="c rt" style="left:670px;width:80px"></div>
<div class="c rt" style="left:750px;width:95px;letter-spacing:-0.2px">250.00</div>
<div class="c rt" style="left:845px;width:84px"></div>
<div class="c rt" style="left:929px;width:111px"></div>
<div class="c rt" style="left:1040px;width:95px"></div>
<div class="c rt" style="left:1135px;width:94px"></div>
<div class="c rt" style="left:1229px;width:96px"></div>
<div class="c" style="left:1325px;width:46px"></div>
<div class="c" style="left:1371px;width:46px"></div>
<div class="c" style="left:1417px;width:54px"></div>
<div class="c" style="left:1471px;width:45px;letter-spacing:-0.2px">00200</div>
<div class="c" style="left:1516px;width:45px">DM1</div>
<div class="c" style="left:1561px;width:46px"></div>
<div class="c" style="left:1607px;width:48px"></div>
<div class="c" style="left:1655px;width:46px"></div>
<div class="c" style="left:1701px;width:45px"></div>
<div class="c" style="left:1746px;width:45px"></div>
<div class="c" style="left:1791px;width:45px"></div>
<div class="c" style="left:1836px;width:45px"></div>
<div class="c" style="left:1881px;width:44px"></div>
<div class="c" style="left:1925px;width:45px"></div>
</div>
<div class="r o" style="top:420px">
<div class="c rad" style="left:0;width:32px"><u></u></div>
<div class="c" style="left:32px;width:33px"></div>
<div class="c" style="left:65px;width:134px;letter-spacing:-0.23px">G250ALL</div>
<div class="c" style="left:199px;width:181px;letter-spacing:-0.11px">G250 with all meters used</div>
<div class="c" style="left:380px;width:161px"></div>
<div class="c" style="left:541px;width:59px">1</div>
<div class="c" style="left:600px;width:70px"></div>
<div class="c rt" style="left:670px;width:80px;letter-spacing:-0.2px">30</div>
<div class="c rt" style="left:750px;width:95px;letter-spacing:-0.2px">300.00</div>
<div class="c rt" style="left:845px;width:84px;letter-spacing:-0.2px">30.00</div>
<div class="c rt" style="left:929px;width:111px;letter-spacing:-0.2px">3,000.00</div>
<div class="c rt" style="left:1040px;width:95px;letter-spacing:-0.2px">200.00</div>
<div class="c rt" style="left:1135px;width:94px;letter-spacing:-0.2px">2,000.00</div>
<div class="c rt" style="left:1229px;width:96px;letter-spacing:-0.2px">20.00</div>
<div class="c" style="left:1325px;width:46px"></div>
<div class="c" style="left:1371px;width:46px"></div>
<div class="c" style="left:1417px;width:54px"></div>
<div class="c" style="left:1471px;width:45px;letter-spacing:-0.2px">00200</div>
<div class="c" style="left:1516px;width:45px">EX1</div>
<div class="c" style="left:1561px;width:46px">EX2</div>
<div class="c" style="left:1607px;width:48px">EX3</div>
<div class="c" style="left:1655px;width:46px"></div>
<div class="c" style="left:1701px;width:45px"></div>
<div class="c" style="left:1746px;width:45px"></div>
<div class="c" style="left:1791px;width:45px"></div>
<div class="c" style="left:1836px;width:45px"></div>
<div class="c" style="left:1881px;width:44px"></div>
<div class="c" style="left:1925px;width:45px"></div>
</div>
<div class="r" style="top:450px">
<div class="c rad" style="left:0;width:32px"><u></u></div>
<div class="c" style="left:32px;width:33px"></div>
<div class="c" style="left:65px;width:134px;letter-spacing:-0.43px">G500</div>
<div class="c" style="left:199px;width:181px;letter-spacing:-0.17px">500 Hr Service Cycle</div>
<div class="c" style="left:380px;width:161px"></div>
<div class="c" style="left:541px;width:59px">1</div>
<div class="c" style="left:600px;width:70px"></div>
<div class="c rt" style="left:670px;width:80px"></div>
<div class="c rt" style="left:750px;width:95px;letter-spacing:-0.2px">500.00</div>
<div class="c rt" style="left:845px;width:84px"></div>
<div class="c rt" style="left:929px;width:111px"></div>
<div class="c rt" style="left:1040px;width:95px"></div>
<div class="c rt" style="left:1135px;width:94px"></div>
<div class="c rt" style="left:1229px;width:96px"></div>
<div class="c" style="left:1325px;width:46px"></div>
<div class="c" style="left:1371px;width:46px"></div>
<div class="c" style="left:1417px;width:54px"></div>
<div class="c" style="left:1471px;width:45px;letter-spacing:-0.2px">00200</div>
<div class="c" style="left:1516px;width:45px"></div>
<div class="c" style="left:1561px;width:46px"></div>
<div class="c" style="left:1607px;width:48px"></div>
<div class="c" style="left:1655px;width:46px"></div>
<div class="c" style="left:1701px;width:45px"></div>
<div class="c" style="left:1746px;width:45px"></div>
<div class="c" style="left:1791px;width:45px"></div>
<div class="c" style="left:1836px;width:45px"></div>
<div class="c" style="left:1881px;width:44px"></div>
<div class="c" style="left:1925px;width:45px"></div>
</div>
<div class="r o" style="top:480px">
<div class="c rad" style="left:0;width:32px"><u></u></div>
<div class="c" style="left:32px;width:33px"></div>
<div class="c" style="left:65px;width:134px;letter-spacing:0.36px">INSP_90D_4STEP</div>
<div class="c" style="left:199px;width:181px;letter-spacing:-0.05px">Inspection 90 Day 4 Step</div>
<div class="c" style="left:380px;width:161px"></div>
<div class="c" style="left:541px;width:59px">1</div>
<div class="c" style="left:600px;width:70px"></div>
<div class="c rt" style="left:670px;width:80px;letter-spacing:-0.2px">90</div>
<div class="c rt" style="left:750px;width:95px"></div>
<div class="c rt" style="left:845px;width:84px"></div>
<div class="c rt" style="left:929px;width:111px"></div>
<div class="c rt" style="left:1040px;width:95px"></div>
<div class="c rt" style="left:1135px;width:94px"></div>
<div class="c rt" style="left:1229px;width:96px"></div>
<div class="c" style="left:1325px;width:46px"></div>
<div class="c" style="left:1371px;width:46px"></div>
<div class="c" style="left:1417px;width:54px"></div>
<div class="c" style="left:1471px;width:45px;letter-spacing:-0.2px">00200</div>
<div class="c" style="left:1516px;width:45px">DM1</div>
<div class="c" style="left:1561px;width:46px"></div>
<div class="c" style="left:1607px;width:48px"></div>
<div class="c" style="left:1655px;width:46px"></div>
<div class="c" style="left:1701px;width:45px"></div>
<div class="c" style="left:1746px;width:45px"></div>
<div class="c" style="left:1791px;width:45px"></div>
<div class="c" style="left:1836px;width:45px"></div>
<div class="c" style="left:1881px;width:44px"></div>
<div class="c" style="left:1925px;width:45px"></div>
</div>
<div class="r" style="top:510px">
<div class="c rad" style="left:0;width:32px"><u></u></div>
<div class="c" style="left:32px;width:33px"></div>
<div class="c" style="left:65px;width:134px;letter-spacing:0.77px">OVIMULTI</div>
<div class="c" style="left:199px;width:181px;letter-spacing:0.01px">OVI Multi Step Cycle</div>
<div class="c" style="left:380px;width:161px"></div>
<div class="c" style="left:541px;width:59px">1</div>
<div class="c" style="left:600px;width:70px"></div>
<div class="c rt" style="left:670px;width:80px"></div>
<div class="c rt" style="left:750px;width:95px;letter-spacing:-0.2px">250.00</div>
<div class="c rt" style="left:845px;width:84px"></div>
<div class="c rt" style="left:929px;width:111px"></div>
<div class="c rt" style="left:1040px;width:95px"></div>
<div class="c rt" style="left:1135px;width:94px"></div>
<div class="c rt" style="left:1229px;width:96px"></div>
<div class="c" style="left:1325px;width:46px"></div>
<div class="c" style="left:1371px;width:46px"></div>
<div class="c" style="left:1417px;width:54px"></div>
<div class="c" style="left:1471px;width:45px;letter-spacing:-0.2px">00200</div>
<div class="c" style="left:1516px;width:45px"></div>
<div class="c" style="left:1561px;width:46px"></div>
<div class="c" style="left:1607px;width:48px"></div>
<div class="c" style="left:1655px;width:46px"></div>
<div class="c" style="left:1701px;width:45px"></div>
<div class="c" style="left:1746px;width:45px"></div>
<div class="c" style="left:1791px;width:45px"></div>
<div class="c" style="left:1836px;width:45px"></div>
<div class="c" style="left:1881px;width:44px"></div>
<div class="c" style="left:1925px;width:45px"></div>
</div>
<div class="r o" style="top:540px">
<div class="c rad" style="left:0;width:32px"><u></u></div>
<div class="c" style="left:32px;width:33px"></div>
<div class="c" style="left:65px;width:134px;letter-spacing:0.33px">OVISINGLE</div>
<div class="c" style="left:199px;width:181px">OVI Single Step Cycle</div>
<div class="c" style="left:380px;width:161px"></div>
<div class="c" style="left:541px;width:59px">1</div>
<div class="c" style="left:600px;width:70px"></div>
<div class="c rt" style="left:670px;width:80px;letter-spacing:-0.2px">365</div>
<div class="c rt" style="left:750px;width:95px"></div>
<div class="c rt" style="left:845px;width:84px"></div>
<div class="c rt" style="left:929px;width:111px;letter-spacing:-0.2px">10,000.00</div>
<div class="c rt" style="left:1040px;width:95px"></div>
<div class="c rt" style="left:1135px;width:94px"></div>
<div class="c rt" style="left:1229px;width:96px"></div>
<div class="c" style="left:1325px;width:46px"></div>
<div class="c" style="left:1371px;width:46px"></div>
<div class="c" style="left:1417px;width:54px"></div>
<div class="c" style="left:1471px;width:45px;letter-spacing:-0.2px">00200</div>
<div class="c" style="left:1516px;width:45px"></div>
<div class="c" style="left:1561px;width:46px"></div>
<div class="c" style="left:1607px;width:48px"></div>
<div class="c" style="left:1655px;width:46px"></div>
<div class="c" style="left:1701px;width:45px"></div>
<div class="c" style="left:1746px;width:45px"></div>
<div class="c" style="left:1791px;width:45px"></div>
<div class="c" style="left:1836px;width:45px"></div>
<div class="c" style="left:1881px;width:44px"></div>
<div class="c" style="left:1925px;width:45px"></div>
</div>
</div>
<div id="sb"><div class="up"></div><div class="th"></div></div>
</div>
</body></html>
